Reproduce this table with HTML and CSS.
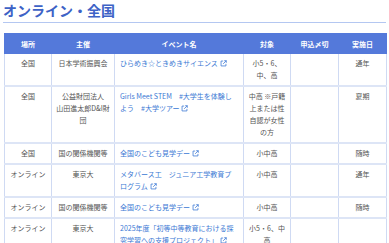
FILE: index.html
```html
<!DOCTYPE html>
<html lang="ja">
<head>
    <meta charset="UTF-8">
    <meta name="viewport" content="width=device-width, initial-scale=1.0">
    <title>オンライン・全国</title>
    <link rel="stylesheet" href="styles.css">
</head>
<body>

<div class="section">
    <h2 class="section-title">オンライン・全国</h2>

    <table class="event-table">
        <colgroup>
            <col class="col-place">
            <col class="col-host">
            <col class="col-name">
            <col class="col-target">
            <col class="col-deadline">
            <col class="col-date">
        </colgroup>
        <thead>
            <tr>
                <th>場所</th>
                <th>主催</th>
                <th>イベント名</th>
                <th>対象</th>
                <th>申込〆切</th>
                <th>実施日</th>
            </tr>
        </thead>
        <tbody>
            <tr>
                <td>全国</td>
                <td>日本学術振興会</td>
                <td class="name"><a href="#">ひらめき☆ときめきサイエンス<svg class="ext" viewBox="0 0 10 10"><path d="M4.5 1.5H1.5v7h7V5.5M6 1h3v3M9 1L4.5 5.5"/></svg></a></td>
                <td>小5・6、<br>中、高</td>
                <td></td>
                <td>通年</td>
            </tr>
            <tr>
                <td>全国</td>
                <td>公益財団法人<br>山田進太郎D&amp;I財<br>団</td>
                <td class="name"><a href="#">Girls Meet STEM　#大学生を体験し<br>よう　#大学ツアー<svg class="ext" viewBox="0 0 10 10"><path d="M4.5 1.5H1.5v7h7V5.5M6 1h3v3M9 1L4.5 5.5"/></svg></a></td>
                <td>中高 ※戸籍<br>上または性<br>自認が女性<br>の方</td>
                <td></td>
                <td>夏期</td>
            </tr>
            <tr>
                <td>全国</td>
                <td>国の関係機関等</td>
                <td class="name"><a href="#">全国のこども見学デー<svg class="ext" viewBox="0 0 10 10"><path d="M4.5 1.5H1.5v7h7V5.5M6 1h3v3M9 1L4.5 5.5"/></svg></a></td>
                <td>小中高</td>
                <td></td>
                <td>随時</td>
            </tr>
            <tr>
                <td>オンライン</td>
                <td>東京大</td>
                <td class="name"><a href="#">メタバース工　ジュニア工学教育プ<br>ログラム<svg class="ext" viewBox="0 0 10 10"><path d="M4.5 1.5H1.5v7h7V5.5M6 1h3v3M9 1L4.5 5.5"/></svg></a></td>
                <td>小中高</td>
                <td></td>
                <td>通年</td>
            </tr>
            <tr>
                <td>オンライン</td>
                <td>国の関係機関等</td>
                <td class="name"><a href="#">全国のこども見学デー<svg class="ext" viewBox="0 0 10 10"><path d="M4.5 1.5H1.5v7h7V5.5M6 1h3v3M9 1L4.5 5.5"/></svg></a></td>
                <td>小中高</td>
                <td></td>
                <td>随時</td>
            </tr>
            <tr>
                <td>オンライン</td>
                <td>東京大</td>
                <td class="name"><a href="#">2025年度「初等中等教育における探<br>究学習への支援プロジェクト」<svg class="ext" viewBox="0 0 10 10"><path d="M4.5 1.5H1.5v7h7V5.5M6 1h3v3M9 1L4.5 5.5"/></svg></a></td>
                <td>小5・6、中<br>高</td>
                <td></td>
                <td></td>
            </tr>
        </tbody>
    </table>
</div>

</body>
</html>
```

FILE: styles.css
```css
body {
    font-family: "Noto Sans CJK JP", "Noto Sans", sans-serif;
    background-color: #fff;
    color: #555;
    margin: 0;
    padding: 3px 3px 0 4px;
}
.section-title {
    margin: 0 0 10px -1px;
    padding: 0 0 4px;
    font-size: 14px;
    line-height: 15px;
    font-weight: bold;
    color: #3d62c6;
    border-bottom: 1px solid #b4c7f1;
}
.event-table {
    width: 382px;
    table-layout: fixed;
    border-collapse: collapse;
    font-size: 7px;
    line-height: 12px;
}
.col-place { width: 47px; }
.col-host { width: 63px; }
.col-name { width: 129px; }
.col-target { width: 47px; }
.col-deadline { width: 48px; }
.col-date { width: 48px; }
.event-table th {
    background-color: #5479da;
    color: #fff;
    font-weight: bold;
    height: 19px;
    padding: 0 3px;
    border: 1px solid #5479da;
    border-left-color: #7d9be6;
}
.event-table th:first-child {
    border-left-color: #5479da;
}
.event-table td {
    padding: 3px 3px 4px;
    text-align: center;
    vertical-align: top;
    white-space: nowrap;
    border: 1px solid #cfdaf3;
    border-bottom: 2px solid #dde5f6;
}
.event-table td.name {
    text-align: left;
    padding-left: 5px;
}
.event-table a {
    color: #3a78d4;
    text-decoration: none;
}
.ext {
    width: 7px;
    height: 7px;
    margin-left: 2px;
    vertical-align: -1px;
    fill: none;
    stroke: #3a78d4;
    stroke-width: 1.1;
}
```
